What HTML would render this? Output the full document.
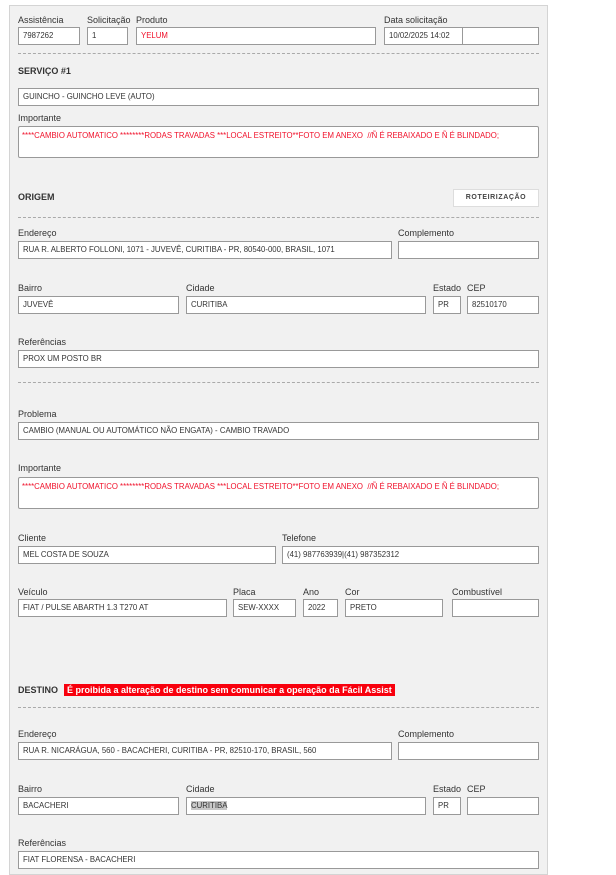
<!DOCTYPE html>
<html><head><meta charset="utf-8"><style>
*{box-sizing:border-box;margin:0;padding:0}
body{width:616px;height:860px;background:#fff;font-family:"Liberation Sans",sans-serif;position:relative;overflow:hidden}
#p{position:absolute;left:9px;top:5px;width:539px;height:870px;background:#f1f1f1;border:1px solid #d4d4d4}
.l{position:absolute;font-size:9px;color:#333;line-height:11px;white-space:nowrap}
.i{position:absolute;height:18px;background:#fff;border:1px solid #999;font-size:7.8px;color:#333;padding:0 4px;line-height:16px;white-space:nowrap;overflow:hidden}
.t{position:absolute;height:32px;background:#fff;border:1px solid #999;border-radius:2px;font-size:7.8px;color:#f0102a;padding:3px 3px;line-height:11px;white-space:nowrap;overflow:hidden}
.h{position:absolute;font-size:9px;font-weight:bold;color:#333}
.d{position:absolute;left:18px;width:521px;border-top:1px dashed #aaa}
.r{color:#f0102a}
</style></head><body>
<div id="p"></div>
<div class="l" style="left:18px;top:15px">Assistência</div>
<div class="l" style="left:87px;top:15px">Solicitação</div>
<div class="l" style="left:136px;top:15px">Produto</div>
<div class="l" style="left:384px;top:15px">Data solicitação</div>
<div class="i" style="left:18px;top:27px;width:62px">7987262</div>
<div class="i" style="left:87px;top:27px;width:41px">1</div>
<div class="i r" style="left:136px;top:27px;width:240px">YELUM</div>
<div class="i" style="left:384px;top:27px;width:79px">10/02/2025 14:02</div>
<div class="i" style="left:462px;top:27px;width:77px"></div>
<div class="d" style="top:53px"></div>
<div class="h" style="left:18px;top:66px">SERVIÇO #1</div>
<div class="i" style="left:18px;top:88px;width:521px">GUINCHO - GUINCHO LEVE (AUTO)</div>
<div class="l" style="left:18px;top:113px">Importante</div>
<div class="t" style="left:18px;top:126px;width:521px">****CAMBIO AUTOMATICO ********RODAS TRAVADAS ***LOCAL ESTREITO**FOTO EM ANEXO &nbsp;//Ñ É REBAIXADO E Ñ É BLINDADO;</div>
<div class="h" style="left:18px;top:192px">ORIGEM</div>
<div style="position:absolute;left:453px;top:189px;width:86px;height:18px;background:#fff;border:1px solid #ddd;font-size:7px;font-weight:bold;letter-spacing:.6px;color:#444;text-align:center;line-height:16px">ROTEIRIZAÇÃO</div>
<div class="d" style="top:217px"></div>
<div class="l" style="left:18px;top:228px">Endereço</div>
<div class="l" style="left:398px;top:228px">Complemento</div>
<div class="i" style="left:18px;top:241px;width:374px">RUA R. ALBERTO FOLLONI, 1071 - JUVEVÊ, CURITIBA - PR, 80540-000, BRASIL, 1071</div>
<div class="i" style="left:398px;top:241px;width:141px"></div>
<div class="l" style="left:18px;top:283px">Bairro</div>
<div class="l" style="left:186px;top:283px">Cidade</div>
<div class="l" style="left:433px;top:283px">Estado</div>
<div class="l" style="left:467px;top:283px">CEP</div>
<div class="i" style="left:18px;top:296px;width:161px">JUVEVÊ</div>
<div class="i" style="left:186px;top:296px;width:240px">CURITIBA</div>
<div class="i" style="left:433px;top:296px;width:28px">PR</div>
<div class="i" style="left:467px;top:296px;width:72px">82510170</div>
<div class="l" style="left:18px;top:337px">Referências</div>
<div class="i" style="left:18px;top:350px;width:521px">PROX UM POSTO BR</div>
<div class="d" style="top:382px"></div>
<div class="l" style="left:18px;top:409px">Problema</div>
<div class="i" style="left:18px;top:422px;width:521px">CAMBIO (MANUAL OU AUTOMÁTICO NÃO ENGATA) - CAMBIO TRAVADO</div>
<div class="l" style="left:18px;top:463px">Importante</div>
<div class="t" style="left:18px;top:477px;width:521px">****CAMBIO AUTOMATICO ********RODAS TRAVADAS ***LOCAL ESTREITO**FOTO EM ANEXO &nbsp;//Ñ É REBAIXADO E Ñ É BLINDADO;</div>
<div class="l" style="left:18px;top:533px">Cliente</div>
<div class="l" style="left:282px;top:533px">Telefone</div>
<div class="i" style="left:18px;top:546px;width:258px">MEL COSTA DE SOUZA</div>
<div class="i" style="left:282px;top:546px;width:257px">(41) 987763939|(41) 987352312</div>
<div class="l" style="left:18px;top:587px">Veículo</div>
<div class="l" style="left:233px;top:587px">Placa</div>
<div class="l" style="left:303px;top:587px">Ano</div>
<div class="l" style="left:345px;top:587px">Cor</div>
<div class="l" style="left:452px;top:587px">Combustível</div>
<div class="i" style="left:18px;top:599px;width:209px">FIAT / PULSE ABARTH 1.3 T270 AT</div>
<div class="i" style="left:233px;top:599px;width:63px">SEW-XXXX</div>
<div class="i" style="left:303px;top:599px;width:35px">2022</div>
<div class="i" style="left:345px;top:599px;width:98px">PRETO</div>
<div class="i" style="left:452px;top:599px;width:87px"></div>
<div class="h" style="left:18px;top:685px">DESTINO</div>
<div style="position:absolute;left:64px;top:684px;width:331px;height:12px;background:#f8000d;color:#fff;font-size:9px;font-weight:bold;line-height:12px;padding-left:3px;white-space:nowrap">É proibida a alteração de destino sem comunicar a operação da Fácil Assist</div>
<div class="d" style="top:707px"></div>
<div class="l" style="left:18px;top:729px">Endereço</div>
<div class="l" style="left:398px;top:729px">Complemento</div>
<div class="i" style="left:18px;top:742px;width:374px">RUA R. NICARÁGUA, 560 - BACACHERI, CURITIBA - PR, 82510-170, BRASIL, 560</div>
<div class="i" style="left:398px;top:742px;width:141px"></div>
<div class="l" style="left:18px;top:784px">Bairro</div>
<div class="l" style="left:186px;top:784px">Cidade</div>
<div class="l" style="left:433px;top:784px">Estado</div>
<div class="l" style="left:467px;top:784px">CEP</div>
<div class="i" style="left:18px;top:797px;width:161px">BACACHERI</div>
<div class="i" style="left:186px;top:797px;width:240px"><span style="background:#c8c8c8">CURITIBA</span></div>
<div class="i" style="left:433px;top:797px;width:28px">PR</div>
<div class="i" style="left:467px;top:797px;width:72px"></div>
<div class="l" style="left:18px;top:838px">Referências</div>
<div class="i" style="left:18px;top:851px;width:521px">FIAT FLORENSA - BACACHERI</div>
</body></html>
